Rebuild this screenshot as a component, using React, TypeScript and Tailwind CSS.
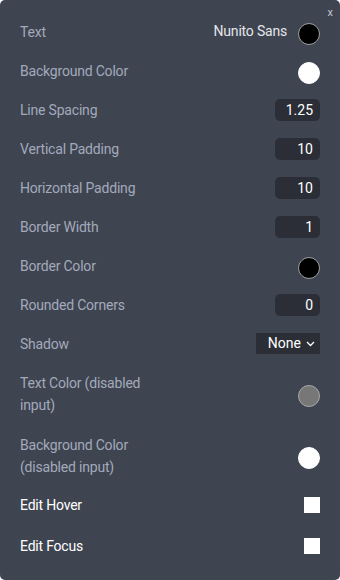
import React from "react";

function Row({ label, children, h = "h-[39px]", white = false }: { label: React.ReactNode; children: React.ReactNode; h?: string; white?: boolean }) {
  return (
    <div className={`flex items-center justify-between ${h}`}>
      <div className={`max-w-[150px] text-[14px] leading-[22px] tracking-[-0.2px] ${white ? "text-white" : "text-[#a2aabb]"}`}>{label}</div>
      <div className="flex items-center">{children}</div>
    </div>
  );
}

function NumInput({ v }: { v: string }) {
  return (
    <div className="w-[45px] h-[22px] rounded-[5px] bg-[#2b2e36] text-white text-[14px] leading-[22px] text-right pr-[7px]">{v}</div>
  );
}

function Circle({ cls }: { cls: string }) {
  return <div className={`w-[22px] h-[22px] rounded-full border mt-[4px] ${cls}`} />;
}

export default function App() {
  return (
    <div className="w-[340px] h-[580px] bg-white" style={{ fontFamily: "Roboto, 'Liberation Sans', sans-serif" }}>
      <div className="relative w-[340px] h-[580px] bg-[#3f4451] rounded-[5px] px-5 pt-[12px]">
        <div className="absolute top-[5px] right-[7px] text-[11px] text-[#c3c7cf]">x</div>
        <Row label="Text">
          <span className="text-[14px] tracking-[-0.2px] text-[#e4e6ea] mr-[11px]">Nunito Sans</span>
          <Circle cls="bg-black border-[#a0a0a0]" />
        </Row>
        <Row label="Background Color">
          <Circle cls="bg-white border-white" />
        </Row>
        <Row label="Line Spacing"><NumInput v="1.25" /></Row>
        <Row label="Vertical Padding"><NumInput v="10" /></Row>
        <Row label="Horizontal Padding"><NumInput v="10" /></Row>
        <Row label="Border Width"><NumInput v="1" /></Row>
        <Row label="Border Color">
          <Circle cls="bg-black border-[#a0a0a0]" />
        </Row>
        <Row label="Rounded Corners"><NumInput v="0" /></Row>
        <Row label="Shadow">
          <div className="w-[64px] h-[21px] bg-[#2b2e36] flex items-center justify-end pr-[5px] text-white text-[14px]">
            <span>None</span>
            <svg width="9" height="6" viewBox="0 0 9 6" className="ml-[5px]" fill="none" stroke="white" strokeWidth="1.3">
              <path d="M1 1 L4.5 4.5 L8 1" />
            </svg>
          </div>
        </Row>
        <Row label="Text Color (disabled input)" h="h-[62px]">
          <Circle cls="bg-[#777777] border-[#a8a8a8]" />
        </Row>
        <Row label="Background Color (disabled input)" h="h-[62px]">
          <Circle cls="bg-white border-white" />
        </Row>
        <Row label="Edit Hover" h="h-[36px]" white>
          <div className="w-[16px] h-[16px] bg-white" />
        </Row>
        <Row label="Edit Focus" h="h-[46px]" white>
          <div className="w-[16px] h-[16px] bg-white" />
        </Row>
      </div>
    </div>
  );
}
